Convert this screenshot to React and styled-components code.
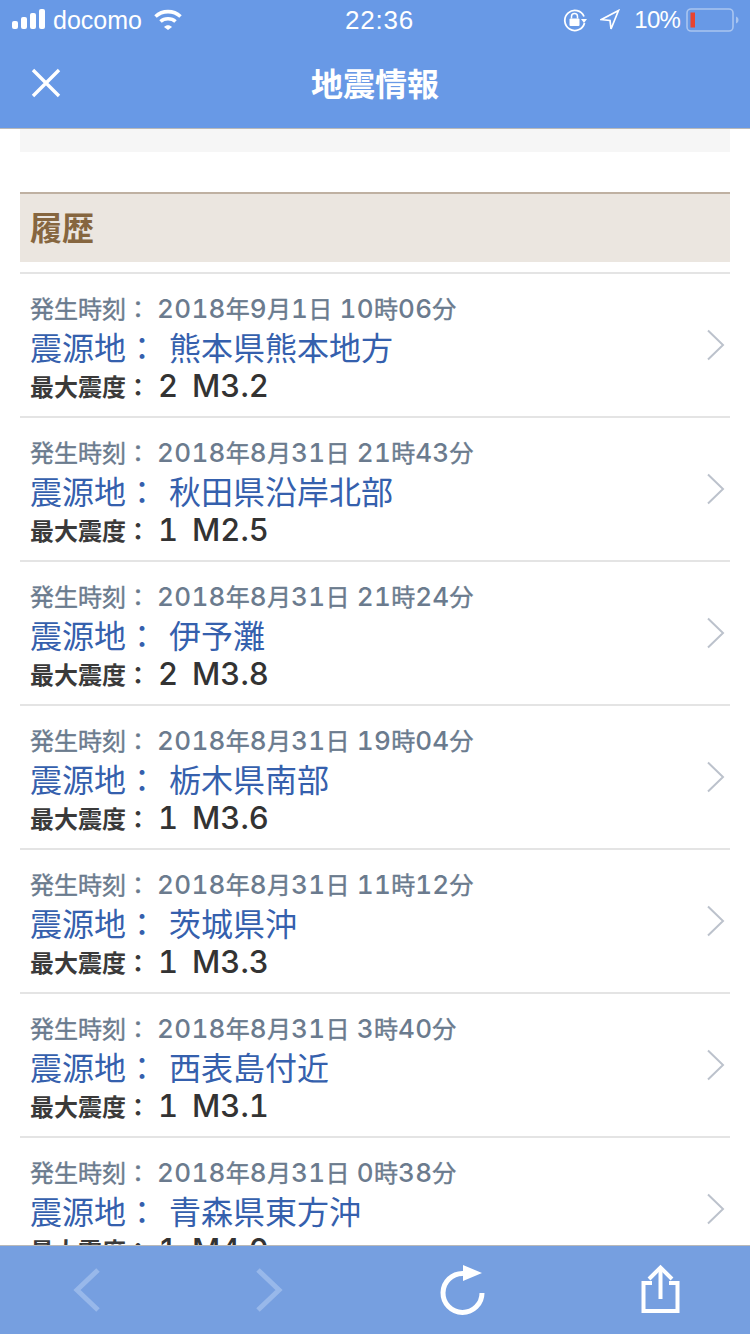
import React from "react";
import styled, { createGlobalStyle } from "styled-components";

const GlobalStyle = createGlobalStyle`
  html, body { margin: 0; padding: 0; background: #fff; }
  body { font-family: "Liberation Sans", "Noto Sans CJK JP", sans-serif; }
`;

const quakes = [
  { time: "2018年9月1日 10時06分", place: "熊本県熊本地方", level: "2", mag: "M3.2" },
  { time: "2018年8月31日 21時43分", place: "秋田県沿岸北部", level: "1", mag: "M2.5" },
  { time: "2018年8月31日 21時24分", place: "伊予灘", level: "2", mag: "M3.8" },
  { time: "2018年8月31日 19時04分", place: "栃木県南部", level: "1", mag: "M3.6" },
  { time: "2018年8月31日 11時12分", place: "茨城県沖", level: "1", mag: "M3.3" },
  { time: "2018年8月31日 3時40分", place: "西表島付近", level: "1", mag: "M3.1" },
  { time: "2018年8月31日 0時38分", place: "青森県東方沖", level: "1", mag: "M4.0" },
];

const Screen = styled.div`
  position: relative;
  width: 750px;
  height: 1334px;
  overflow: hidden;
  display: flex;
  flex-direction: column;
  background: #fff;
`;

const TopBar = styled.header`
  flex: none;
  height: 128px;
  background: #6899e6;
  color: #fff;
  border-bottom: 1px solid #b9b9b9;
`;

const StatusBar = styled.div`
  height: 40px;
  padding: 0 11px 0 12px;
  display: grid;
  grid-template-columns: 1fr auto 1fr;
  align-items: center;
  font-size: 25px;
`;

const StatusSide = styled.div`
  display: flex;
  align-items: center;
  justify-content: ${(p) => (p.$end ? "flex-end" : "flex-start")};
`;

const Carrier = styled.span`
  margin-left: 7px;
  margin-right: 12px;
`;

const Clock = styled.span`
  margin-left: 8px;
  font-size: 26px;
  letter-spacing: 0.8px;
`;

const Percent = styled.span`
  margin-left: 14px;
  margin-right: 6px;
  font-size: 24px;
  letter-spacing: -0.8px;
`;

const LockIcon = styled.svg`
  margin-right: 13px;
`;

const Nav = styled.div`
  height: 88px;
  position: relative;
  display: flex;
  justify-content: center;
`;

const NavTitle = styled.h1`
  margin: 0;
  font-size: 32px;
  font-weight: 700;
  line-height: 84px;
  font-family: "Noto Sans CJK JP", sans-serif;
`;

const CloseButton = styled.div`
  position: absolute;
  left: 30px;
  top: 27px;
  width: 32px;
  height: 32px;
`;

const Content = styled.main`
  flex: 1;
  min-height: 0;
  padding: 0 20px;
`;

const GreyBand = styled.div`
  height: 23px;
  background: #f6f6f6;
`;

const SectionHead = styled.h2`
  margin: 40px 0 10px;
  height: 68px;
  padding-left: 10px;
  border-top: 2px solid #bfb1a2;
  background: #ebe6e0;
  color: #86663f;
  font-size: 32px;
  font-weight: 700;
  line-height: 64px;
  font-family: "Noto Sans CJK JP", sans-serif;
`;

const List = styled.ul`
  margin: 0;
  padding: 0;
  list-style: none;
  border-top: 2px solid #e4e4e4;
`;

const Row = styled.li`
  position: relative;
  box-sizing: border-box;
  height: 144px;
  padding: 13px 10px 0;
  border-bottom: 2px solid #e4e4e4;
`;

const Line = styled.div`
  display: flex;
  align-items: center;
  height: ${(p) => p.$h}px;
  white-space: nowrap;
`;

const TimeLabel = styled.span`
  width: 127px;
  font-size: 24px;
  color: #6b7b8e;
  font-family: "Noto Sans CJK JP", sans-serif;
  -webkit-text-stroke: 0.4px #6b7b8e;
`;

const TimeValue = styled.span`
  font-family: Inter, "Liberation Sans", sans-serif;
  font-size: 26px;
  font-weight: 500;
  font-feature-settings: "tnum";
  letter-spacing: 0.35px;
  color: #6b7b8e;
  white-space: pre;
`;

const TimeKanji = styled.span`
  font-family: "Noto Sans CJK JP", sans-serif;
  font-size: 24px;
  font-weight: 400;
  letter-spacing: 0;
  -webkit-text-stroke: 0.4px #6b7b8e;
`;

const PlaceLabel = styled.span`
  width: 139px;
  font-size: 32px;
  color: #3560ad;
  font-family: "Noto Sans CJK JP", sans-serif;
  font-weight: 400;
`;

const PlaceValue = styled.span`
  font-size: 32px;
  color: #3560ad;
  font-family: "Noto Sans CJK JP", sans-serif;
`;

const LevelLabel = styled.span`
  width: 128px;
  font-size: 24px;
  font-weight: 700;
  color: #3a3a3a;
  font-family: "Noto Sans CJK JP", sans-serif;
`;

const LevelValue = styled.span`
  display: flex;
  font-family: Inter, "Liberation Sans", sans-serif;
  font-size: 31px;
  font-weight: 500;
  font-feature-settings: "tnum";
  color: #333;
`;

const LevelDigit = styled.span`
  width: 34px;
`;

const Chevron = styled.svg`
  position: absolute;
  right: 4px;
  top: 55px;
`;

const BottomBar = styled.footer`
  position: absolute;
  left: 0;
  right: 0;
  bottom: 0;
  height: 88px;
  border-top: 1px solid #b9b9b9;
  background: #769fe0;
`;

const ToolIcon = styled.svg`
  position: absolute;
  left: ${(p) => p.$x}px;
  top: ${(p) => p.$y}px;
`;

function SignalBars() {
  return (
    <svg width="34" height="22" viewBox="0 0 34 22" fill="#fff">
      <rect x="0" y="12" width="6" height="8" rx="2" />
      <rect x="9" y="8" width="6" height="12" rx="2" />
      <rect x="18" y="4" width="6" height="16" rx="2" />
      <rect x="27" y="0" width="6" height="20" rx="2" />
    </svg>
  );
}

function WifiIcon() {
  return (
    <svg width="28" height="22" viewBox="0 0 28 22" fill="none" stroke="#fff" strokeWidth="3.6">
      <path d="M1.5 7.5 C8.5 1 19.5 1 26.5 7.5" />
      <path d="M6.5 12.5 C10.5 8.8 17.5 8.8 21.5 12.5" />
      <path d="M10 19 L14 22 L18 19 C15.5 16.5 12.5 16.5 10 19 Z" fill="#fff" stroke="none" transform="translate(0 -1)" />
    </svg>
  );
}

function RotationLock() {
  return (
    <LockIcon width="24" height="24" viewBox="0 0 24 24" fill="none">
      <path d="M21 8.5 A10 10 0 1 0 21.5 15" stroke="#fff" strokeWidth="1.8" />
      <path d="M18 11 L24 11 L21 15 Z" fill="#fff" />
      <rect x="6.5" y="10.5" width="10" height="7.5" rx="1" fill="#fff" />
      <path d="M8.5 10.5 V8.5 A3 3 0 0 1 14.5 8.5 V10.5" stroke="#fff" strokeWidth="1.5" />
    </LockIcon>
  );
}

function LocationArrow() {
  return (
    <svg width="20" height="22" viewBox="0 0 20 22" fill="none" stroke="#fff" strokeWidth="1.7">
      <path d="M18.5 1.5 L1.5 10.5 L10 11.5 L11 20 Z" strokeLinejoin="miter" />
    </svg>
  );
}

function Battery() {
  return (
    <svg width="53" height="24" viewBox="0 0 53 24" fill="none">
      <rect x="1" y="1" width="46" height="22" rx="4" stroke="#a9c5f0" strokeWidth="1.6" />
      <rect x="4.500" y="4.500" width="4.500" height="15" fill="#e8432f" />
      <path d="M50 8.500 C52 9.500 52.500 10.500 52.500 12 C52.500 13.500 52 14.500 50 15.500 Z" fill="#a9c5f0" />
    </svg>
  );
}

// digits and kanji have different sizes in the date line
function DateText({ text }) {
  return (
    <TimeValue>
      {text.split(/(\d+| )/).filter(Boolean).map((part, i) =>
        /\d| /.test(part) ? part : <TimeKanji key={i}>{part}</TimeKanji>
      )}
    </TimeValue>
  );
}

export default function App() {
  return (
    <>
      <GlobalStyle />
      <Screen>
        <TopBar>
          <StatusBar>
            <StatusSide>
              <SignalBars />
              <Carrier>docomo</Carrier>
              <WifiIcon />
            </StatusSide>
            <Clock>22:36</Clock>
            <StatusSide $end>
              <RotationLock />
              <LocationArrow />
              <Percent>10%</Percent>
              <Battery />
            </StatusSide>
          </StatusBar>
          <Nav>
            <CloseButton>
              <svg width="32" height="32" viewBox="0 0 32 32" stroke="#fff" strokeWidth="3.4">
                <path d="M3 3 L29 29 M29 3 L3 29" />
              </svg>
            </CloseButton>
            <NavTitle>地震情報</NavTitle>
          </Nav>
        </TopBar>
        <Content>
          <GreyBand />
          <SectionHead>履歴</SectionHead>
          <List>
            {quakes.map((q) => (
              <Row key={q.time}>
                <Line $h={40}>
                  <TimeLabel>発生時刻：</TimeLabel>
                  <DateText text={q.time} />
                </Line>
                <Line $h={38}>
                  <PlaceLabel>震源地：</PlaceLabel>
                  <PlaceValue>{q.place}</PlaceValue>
                </Line>
                <Line $h={40}>
                  <LevelLabel>最大震度：</LevelLabel>
                  <LevelValue>
                    <LevelDigit>{q.level}</LevelDigit>
                    <span>{q.mag}</span>
                  </LevelValue>
                </Line>
                <Chevron width="20" height="32" viewBox="0 0 20 32" fill="none" stroke="#bcc2cc" strokeWidth="2">
                  <path d="M2 1.5 L17 16 L2 30.5" />
                </Chevron>
              </Row>
            ))}
          </List>
        </Content>
        <BottomBar>
          <ToolIcon $x={73} $y={22} width="28" height="44" viewBox="0 0 28 44" fill="none" stroke="#98b8ea" strokeWidth="5">
            <path d="M25 2 L4 22 L25 42" />
          </ToolIcon>
          <ToolIcon $x={255} $y={22} width="28" height="44" viewBox="0 0 28 44" fill="none" stroke="#98b8ea" strokeWidth="5">
            <path d="M3 2 L24 22 L3 42" />
          </ToolIcon>
          <ToolIcon $x={438} $y={17} width="50" height="54" viewBox="0 0 50 54">
            <path d="M44 30 A19.5 19.5 0 1 1 25 10.5" fill="none" stroke="#fff" strokeWidth="5" />
            <path d="M25 2 L44 10 L25 18 Z" fill="#fff" />
          </ToolIcon>
          <ToolIcon $x={640} $y={18} width="40" height="50" viewBox="0 0 40 50" fill="none" stroke="#fff" strokeWidth="4">
            <path d="M12 19 H3.500 V47 H37.500 V19 H29" />
            <path d="M20.500 35 V4" />
            <path d="M9 15 L20.500 3.500 L32 15" />
          </ToolIcon>
        </BottomBar>
      </Screen>
    </>
  );
}
